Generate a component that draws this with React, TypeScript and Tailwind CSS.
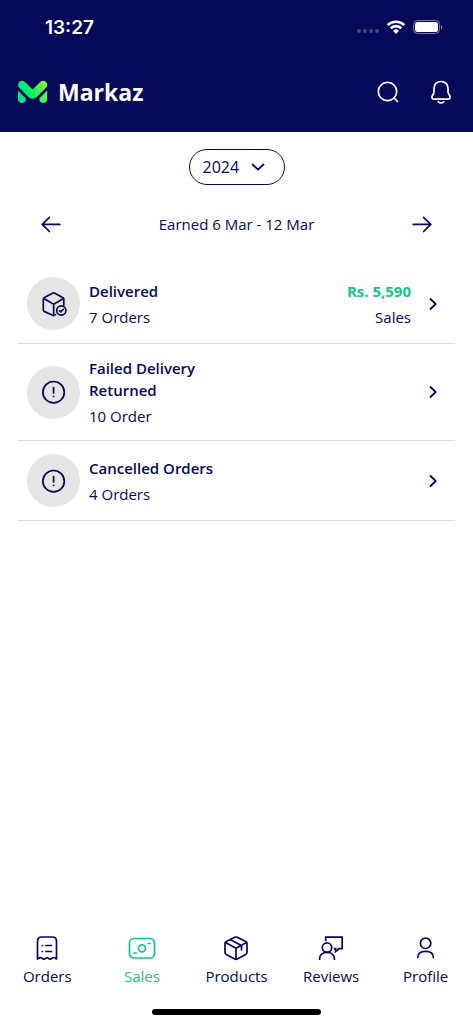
import type { ReactNode } from "react";

type IconProps = { className?: string; children: ReactNode };

function Icon({ className = "size-7", children }: IconProps) {
  return (
    <svg
      viewBox="0 0 28 28"
      className={className}
      fill="none"
      stroke="currentColor"
      strokeWidth="1.7"
      strokeLinecap="round"
      strokeLinejoin="round"
      aria-hidden="true"
    >
      {children}
    </svg>
  );
}

const ArrowLeft = () => (
  <Icon>
    <path d="M22.8 14.400H5.200M12.400 7.300l-7.200 7.100 7.200 7.100" />
  </Icon>
);

const ArrowRight = () => (
  <Icon>
    <path d="M5.200 14.400h17.600M15.600 7.300l7.200 7.100-7.200 7.100" />
  </Icon>
);

const DeliveredIcon = () => (
  <Icon>
    <path d="M15.5 24.7 14 25.3c-.5.2-.9.1-1.4-.1l-8-3.6c-.8-.4-1.3-1-1.3-2V9.300c0-.8.4-1.400 1.200-1.800l8-4.300c.8-.4 1.500-.4 2.300 0l7.800 4.300c.8.400 1.200 1 1.200 1.800v6.200" />
    <path d="m3.800 8.500 9.900 5.700 9.800-5.700M13.700 14.200v11.200" />
    <circle cx="21.300" cy="20.500" r="4.600" />
    <path d="m19.500 20.700 1.300 1.300 2.400-2.700" />
  </Icon>
);

const AlertIcon = () => (
  <Icon>
    <circle cx="13.600" cy="14.200" r="10.700" />
    <path d="M13.600 9.500v5.400M13.600 18.300v.1" />
  </Icon>
);

const OrdersIcon = () => (
  <Icon>
    <path d="M4.500 25V7.200c0-2.900 1.300-4.200 4.200-4.200h10.600c2.900 0 4.200 1.300 4.200 4.200V25l-2.200-1.200c-.7-.4-1.400-.3-2 .2l-1.200.8c-.8.500-1.500.5-2.200-.1l-.8-.6c-.7-.5-1.500-.5-2.200 0l-.8.600c-.7.600-1.500.600-2.200.1l-1.200-.8c-.6-.5-1.300-.6-2-.2Z" />
    <path d="M13 11.500h5.500M13 17.500h5.500M9.300 11.500h.2M9.300 17.500h.2" />
  </Icon>
);

const SalesIcon = () => (
  <Icon>
    <rect x="1.500" y="4.500" width="25" height="19.500" rx="4.500" />
    <circle cx="14" cy="14.300" r="3.500" />
    <path d="M20 9.500h2.200M6 19h2.200" />
  </Icon>
);

const ProductsIcon = () => (
  <Icon>
    <path d="M12.800 3.300c.8-.4 1.600-.4 2.400 0l8.500 4.300c.9.500 1.300 1.100 1.300 2v9c0 .9-.4 1.500-1.300 2l-8.500 4.400c-.8.400-1.600.4-2.400 0l-8.500-4.400c-.9-.5-1.300-1.100-1.300-2v-9c0-.9.4-1.500 1.300-2Z" />
    <path d="m3.500 8.500 10.500 5.700 10.500-5.700M14 14.200v11M8.500 5.700l11 5.800v4.300" />
  </Icon>
);

const ReviewsIcon = () => (
  <Icon>
    <g strokeLinecap="butt" strokeLinejoin="miter">
      <circle cx="10" cy="13.600" r="4.700" />
      <path d="M2.600 26v-1.300c0-3.800 3-6.400 7.400-6.400s7.400 2.600 7.400 6.400V26" />
      <path d="M8.700 7V3.200h16.500v11.500h-3.200l-3.400 3v-3h-1.800" />
    </g>
  </Icon>
);

const ProfileIcon = () => (
  <Icon>
    <circle cx="13.600" cy="9.300" r="5.200" />
    <path d="M5.800 23.600c0-3.900 3-6.200 7.800-6.200s7.800 2.300 7.800 6.200" />
  </Icon>
);

const orders = [
  {
    title: "Delivered",
    count: "7 Orders",
    icon: <DeliveredIcon />,
    amount: "Rs. 5,590",
  },
  { title: "Failed Delivery Returned", count: "10 Order", icon: <AlertIcon /> },
  { title: "Cancelled Orders", count: "4 Orders", icon: <AlertIcon /> },
];

const tabs = [
  { label: "Orders", icon: <OrdersIcon /> },
  { label: "Sales", icon: <SalesIcon />, active: true },
  { label: "Products", icon: <ProductsIcon /> },
  { label: "Reviews", icon: <ReviewsIcon /> },
  { label: "Profile", icon: <ProfileIcon /> },
];

function StatusBar() {
  return (
    <div className="flex h-[54px] items-center justify-between pr-[30px] pl-[45px]">
      <span className="pt-0.5 font-['Inter',sans-serif] text-[19px] leading-6 font-semibold">
        13:27
      </span>
      <div className="flex items-center gap-[7px]">
        <svg viewBox="0 0 22 4" className="mt-2 h-1 w-[22px] fill-white/25" aria-hidden="true">
          <circle cx="2" cy="2" r="2" />
          <circle cx="8" cy="2" r="2" />
          <circle cx="14" cy="2" r="2" />
          <circle cx="20" cy="2" r="2" />
        </svg>
        <svg viewBox="0 0 20 14" className="h-[14px] w-5" aria-hidden="true">
          <g fill="none" stroke="white" strokeWidth="2.600">
            <path d="M1.700 5.100a12 12 0 0 1 16.600 0" />
            <path d="M4.700 8.300a7.600 7.600 0 0 1 10.600 0" />
          </g>
          <path d="M10 14 6.900 10.800a4.500 4.500 0 0 1 6.200 0Z" fill="white" />
        </svg>
        <svg viewBox="0 0 30 14" className="h-[14px] w-[30px]" aria-hidden="true">
          <rect x=".5" y=".5" width="26" height="13" rx="4" fill="none" stroke="white" strokeOpacity=".45" />
          <rect x="2" y="2" width="23" height="10" rx="2.500" fill="white" />
          <path d="M28 5v4.500c1.700-.8 1.700-3.700 0-4.500Z" fill="white" fillOpacity=".5" />
        </svg>
      </div>
    </div>
  );
}

function Logo() {
  return (
    <svg viewBox="0 0 30 24" className="h-6 w-[30px]" aria-hidden="true">
      <defs>
        <linearGradient id="mark" x1="0" y1="16" x2="29" y2="6" gradientUnits="userSpaceOnUse">
          <stop stopColor="#00e58f" />
          <stop offset=".45" stopColor="#08ee62" />
          <stop offset="1" stopColor="#8af63a" />
        </linearGradient>
        <linearGradient id="foot" x1="0" y1="0" x2="29" y2="0" gradientUnits="userSpaceOnUse">
          <stop stopColor="#00df91" />
          <stop offset="1" stopColor="#59f64b" />
        </linearGradient>
      </defs>
      <path
        d="M1.200 2C2.800.4 5.400.5 7 2.100l7.600 7.500 7.600-7.500c1.600-1.600 4.200-1.700 5.800-.1s1.600 4.200 0 5.800l-9.300 9.300c-2.400 2.300-5.800 2.300-8.200 0L1.200 7.800C-.3 6.200-.3 3.600 1.200 2Z"
        fill="url(#mark)"
      />
      <path d="M0 10.500v8.700C0 21.500 1.700 23 3.800 23c2.200 0 3.800-1.500 4-3.500l.1-1.100Z" fill="url(#foot)" />
      <path d="M29.200 10.500v8.700c0 2.300-1.700 3.800-3.800 3.800-2.200 0-3.800-1.500-4-3.500l-.1-1.100Z" fill="url(#foot)" />
    </svg>
  );
}

export default function App() {
  return (
    <div className="flex min-h-screen flex-col bg-white font-['Open_Sans','Noto_Sans',sans-serif] text-[#060957]">
      <header className="bg-[#060957] text-white">
        <StatusBar />
        <div className="flex h-[78px] items-center justify-between pr-[18px] pb-0.5 pl-[18px]">
          <a href="#home" className="flex items-center gap-[10px]">
            <Logo />
            <span className="text-[23px] leading-8 font-bold">Markaz</span>
          </a>
          <div className="flex items-center gap-[25px]">
            <button type="button" aria-label="Search">
              <Icon>
                <circle cx="13.500" cy="13.500" r="9.200" />
                <path d="m20 20 3.500 3.500" />
              </Icon>
            </button>
            <button type="button" aria-label="Notifications">
              <Icon>
                <path d="M14 3.500c-4.200 0-7 2.900-7 7v3.300c0 1.300-.8 2.400-1.500 3.500-1.300 2.100-.4 3.900 1.900 3.900h13.200c2.300 0 3.200-1.800 1.900-3.900-.7-1.100-1.500-2.200-1.500-3.500v-3.300c0-4.100-2.800-7-7-7ZM11.300 23.800c1.500 1.300 3.900 1.300 5.400 0" />
              </Icon>
            </button>
          </div>
        </div>
      </header>

      <main className="flex flex-1 flex-col px-[18px] pt-[17px]">
        <div className="relative self-center">
          <select
            aria-label="Year"
            defaultValue="2024"
            className="block h-9 w-24 appearance-none rounded-full border border-[#060957] bg-white pl-[13px] text-base leading-6"
          >
            <option>2024</option>
            <option>2023</option>
          </select>
          <svg
            viewBox="0 0 14 8"
            className="pointer-events-none absolute top-[14px] right-5 h-2 w-[14px]"
            fill="none"
            stroke="currentColor"
            strokeWidth="1.800"
            strokeLinecap="round"
            strokeLinejoin="round"
            aria-hidden="true"
          >
            <path d="m1.500 1.500 5.500 5 5.500-5" />
          </svg>
        </div>

        <div className="mt-[25px] flex items-center justify-between px-[19px]">
          <button type="button" aria-label="Previous week">
            <ArrowLeft />
          </button>
          <p className="text-[15px] leading-[22px]">Earned 6 Mar - 12 Mar</p>
          <button type="button" aria-label="Next week">
            <ArrowRight />
          </button>
        </div>

        <ul className="mt-[26px]">
          {orders.map((order) => (
            <li key={order.title} className="border-b border-[#dcdcdc]">
              <a href="#details" className="flex items-center py-[13px] pr-[13px] pl-[9px]">
                <span className="flex size-[53px] shrink-0 items-center justify-center rounded-full bg-[#e5e5e5]">
                  {order.icon}
                </span>
                <span className="ml-[9px] w-[132px]">
                  <span className="block text-[15px] leading-[22px] font-semibold">{order.title}</span>
                  <span className="mt-1 block text-[15px] leading-[22px]">{order.count}</span>
                </span>
                {order.amount && (
                  <span className="ml-auto text-right">
                    <span className="block text-[15px] leading-[22px] font-bold text-[#14c587]">
                      {order.amount}
                    </span>
                    <span className="mt-1 block text-[15px] leading-[22px]">Sales</span>
                  </span>
                )}
                <svg
                  viewBox="0 0 18 18"
                  className={order.amount ? "ml-[13px] size-[18px]" : "ml-auto size-[18px]"}
                  fill="none"
                  stroke="currentColor"
                  strokeWidth="1.800"
                  strokeLinecap="round"
                  strokeLinejoin="round"
                  aria-hidden="true"
                >
                  <path d="m6.500 4 5.200 5-5.200 5" />
                </svg>
              </a>
            </li>
          ))}
        </ul>
      </main>

      <nav className="grid grid-cols-5 pb-[22px]">
        {tabs.map((tab) => (
          <a
            key={tab.label}
            href={`#${tab.label.toLowerCase()}`}
            className={
              tab.active
                ? "flex flex-col items-center gap-[3px] text-[#14c587]"
                : "flex flex-col items-center gap-[3px]"
            }
          >
            {tab.icon}
            <span className="text-[15px] leading-[22px]">{tab.label}</span>
          </a>
        ))}
      </nav>
      <div className="mb-[9px] h-[6px] w-[169px] self-center rounded-full bg-black" />
    </div>
  );
}
